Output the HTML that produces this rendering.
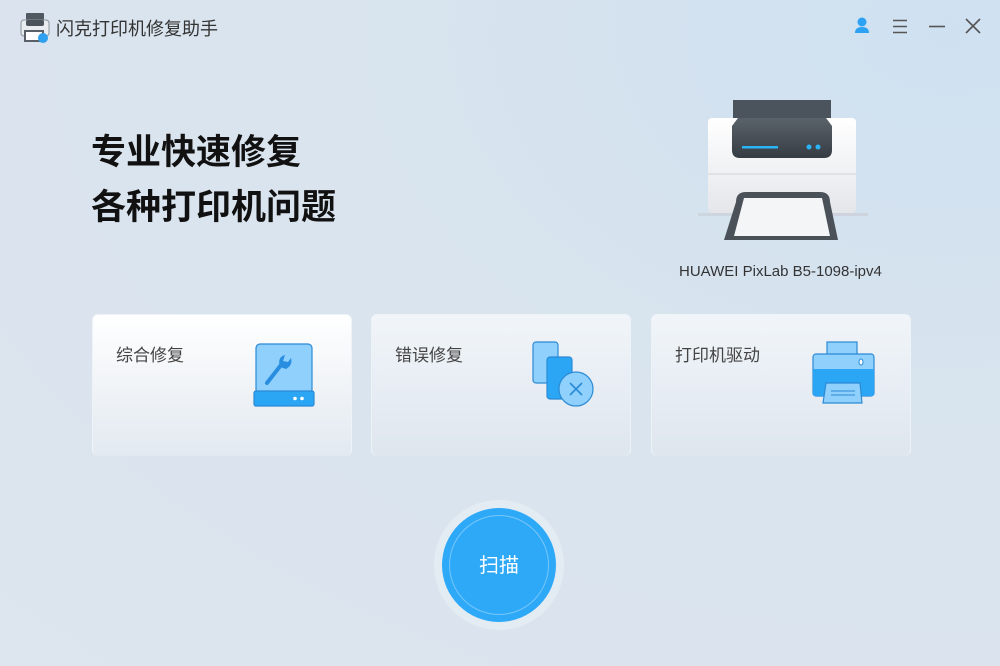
<!DOCTYPE html>
<html><head><meta charset="utf-8"><style>
*{margin:0;padding:0;box-sizing:border-box}
body{width:1000px;height:666px;overflow:hidden;font-family:"Liberation Sans","Noto Sans CJK SC",sans-serif;background:radial-gradient(ellipse at 95% 5%,#cfe1f1 0%,#d9e4ee 45%,#dde5ee 100%);position:relative;color:#333}
.abs{position:absolute}
.title{left:56px;top:15px;font-size:18px;color:#333}
h1{position:absolute;left:91px;font-size:35px;font-weight:bold;color:#111;letter-spacing:0}
.card{position:absolute;top:314px;width:260px;height:142px;border-radius:6px;background:linear-gradient(#f1f5f9,#dee6ee);border:1px solid #eef3f8;border-bottom:none}
.card.first{background:linear-gradient(#ffffff,#e2e9f0)}
.card span{position:absolute;left:23px;top:26px;font-size:17px;color:#444}
.card svg{position:absolute}
</style></head><body>
<svg class="abs" style="left:20px;top:12px" width="30" height="32" viewBox="0 0 30 32">
<rect x="6" y="1" width="18" height="8" rx="1" fill="#505860"/>
<rect x="1" y="8" width="28" height="16" rx="3" fill="#e8ecf0" stroke="#8a939c"/>
<rect x="6" y="8" width="18" height="6" rx="2" fill="#4a525a"/>
<rect x="5" y="19" width="18" height="10" fill="#fff" stroke="#5a6068" stroke-width="2"/>
<circle cx="23" cy="26" r="5" fill="#2ea0f0"/>
</svg>
<div class="abs title">闪克打印机修复助手</div>
<svg class="abs" style="left:854px;top:17px" width="16" height="17" viewBox="0 0 16 17"><circle cx="8" cy="5" r="4.5" fill="#2ea2f2"/><path d="M1 16 Q1 10 8 10 Q15 10 15 16Z" fill="#2ea2f2"/></svg>
<svg class="abs" style="left:892px;top:19px" width="16" height="15"><path d="M1 1.5H15M1 7.5H15M1 13.5H15" stroke="#555" stroke-width="1.6"/></svg>
<svg class="abs" style="left:928px;top:19px" width="18" height="15"><path d="M1 7.5H17" stroke="#555" stroke-width="1.6"/></svg>
<svg class="abs" style="left:965px;top:18px" width="16" height="16"><path d="M1 1L15 15M15 1L1 15" stroke="#555" stroke-width="1.6"/></svg>

<h1 style="top:124px">专业快速修复</h1>
<h1 style="top:179px">各种打印机问题</h1>

<svg class="abs" style="left:698px;top:98px" width="170" height="150" viewBox="0 0 170 150">
<defs><linearGradient id="g1" x1="0" y1="0" x2="0" y2="1"><stop offset="0" stop-color="#ffffff"/><stop offset="1" stop-color="#e4e6ea"/></linearGradient>
<linearGradient id="g2" x1="0" y1="0" x2="0" y2="1"><stop offset="0" stop-color="#5a626b"/><stop offset="1" stop-color="#363c43"/></linearGradient></defs>
<rect x="35" y="2" width="98" height="20" fill="#4b535c"/>
<rect x="10" y="20" width="148" height="95" rx="4" fill="url(#g1)"/>
<line x1="10" y1="76" x2="158" y2="76" stroke="#d0d3d8"/>
<path d="M40 20H128L134 28V52Q134 60 126 60H42Q34 60 34 52V28Z" fill="url(#g2)"/>
<rect x="44" y="48" width="36" height="2.5" fill="#2ab4f4"/>
<circle cx="111" cy="49" r="2.5" fill="#2ab4f4"/><circle cx="120" cy="49" r="2.5" fill="#2ab4f4"/>
<rect x="0" y="115" width="170" height="3" fill="#c8ccd2" opacity=".6"/>
<path d="M38 104Q38 94 48 94H122Q132 94 132 104L140 142H26Z" fill="#4a5158"/>
<path d="M46 100H124L132 138H36Z" fill="#f4f5f7"/>
</svg>
<div class="abs" style="left:679px;top:263px;font-size:15px;color:#333">HUAWEI PixLab B5-1098-ipv4</div>

<div class="card first" style="left:92px"><span>综合修复</span>
<svg style="left:160px;top:28px" width="64" height="66" viewBox="0 0 64 66">
<rect x="3" y="1" width="56" height="56" rx="4" fill="#8fd0fd" stroke="#2c8ad4" stroke-width="1.2"/>
<rect x="1" y="48" width="60" height="15" rx="2" fill="#2aa6f4" stroke="#2c8ad4" stroke-width="1.2"/>
<circle cx="42" cy="55.5" r="1.8" fill="#fff"/><circle cx="49" cy="55.5" r="1.8" fill="#fff"/>
<path d="M14 40L28 22" stroke="#2a8ee0" stroke-width="4" stroke-linecap="round"/>
<path d="M27 24Q24 14 32 12L30 18L35 19L38 15Q40 22 33 26Z" fill="#2a8ee0"/>
</svg></div>
<div class="card" style="left:371px"><span>错误修复</span>
<svg style="left:158px;top:26px" width="70" height="70" viewBox="0 0 70 70">
<rect x="3" y="1" width="25" height="41" rx="3" fill="#8fd0fd" stroke="#2c8ad4" stroke-width="1.2"/>
<rect x="17" y="16" width="25" height="42" rx="3" fill="#2aa6f4" stroke="#2c8ad4" stroke-width="1.2"/>
<circle cx="46" cy="48" r="17" fill="#8fd0fd" stroke="#2c8ad4" stroke-width="1.2"/>
<path d="M40 42L52 54M52 42L40 54" stroke="#2c8ad4" stroke-width="1.6"/>
</svg></div>
<div class="card" style="left:651px"><span>打印机驱动</span>
<svg style="left:160px;top:26px" width="64" height="64" viewBox="0 0 64 64">
<rect x="15" y="1" width="30" height="14" fill="#8fd0fd" stroke="#2c8ad4" stroke-width="1.2"/>
<rect x="1" y="13" width="61" height="42" rx="3" fill="#8fd0fd" stroke="#2c8ad4" stroke-width="1.2"/>
<rect x="1" y="28" width="61" height="27" rx="2" fill="#2aa6f4"/>
<ellipse cx="49" cy="21" rx="2" ry="3" fill="#fff" stroke="#2c8ad4"/>
<path d="M14 42H48L50 62H11Z" fill="#8fd0fd" stroke="#2c8ad4" stroke-width="1.2"/>
<path d="M19 50H43M19 54H43" stroke="#2c8ad4"/>
</svg></div>

<div class="abs" style="left:434px;top:500px;width:130px;height:130px;border-radius:50%;background:#e3ebf3"></div>
<div class="abs" style="left:442px;top:508px;width:114px;height:114px;border-radius:50%;background:#2ea9f8"></div>
<div class="abs" style="left:449px;top:515px;width:100px;height:100px;border-radius:50%;border:1px solid rgba(255,255,255,.35)"></div>
<div class="abs" style="left:442px;top:549px;width:114px;text-align:center;font-size:20px;color:#fff">扫描</div>
</body></html>
